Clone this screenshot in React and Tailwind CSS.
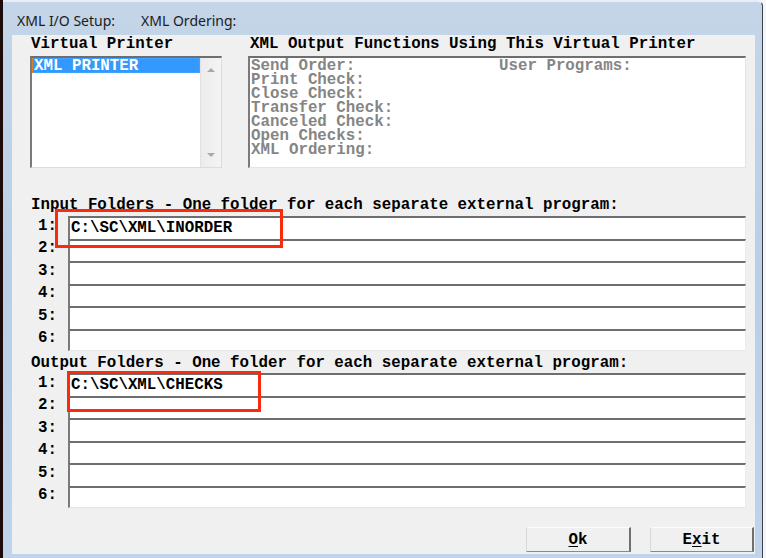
import React from "react";

const mono = "font-['Liberation_Mono',monospace] font-bold text-[15.8px] leading-[14px]";

const functions = [
  "Send Order:",
  "Print Check:",
  "Close Check:",
  "Transfer Check:",
  "Canceled Check:",
  "Open Checks:",
  "XML Ordering:",
];

function FolderRows({ values }) {
  return (
    <div className="flex flex-col">
      {[1, 2, 3, 4, 5, 6].map((n, i) => (
        <div key={n} className="flex h-[22.5px]">
          <div className={`${mono} w-[38px] shrink-0 flex items-center justify-end pr-[11px] pb-[3px] text-black`}>
            {n}:
          </div>
          <div
            className={`flex-1 bg-white border-t-2 border-l-2 border-t-[#6e6e6e] border-l-[#7a7a7a] flex items-center pl-[1px] ${
              i === 5 ? "border-b border-b-[#e6e6e6]" : ""
            } border-r border-r-[#ececec]`}
          >
            <span className={`${mono} text-black`}>{values[i] || ""}</span>
          </div>
        </div>
      ))}
    </div>
  );
}

function Arrow({ up }) {
  return (
    <svg width="8" height="5" viewBox="0 0 8 5">
      {up ? <path d="M0 5 L4 1 L8 5 Z" fill="#a9a9a9" /> : <path d="M0 0 L4 4 L8 0 Z" fill="#a9a9a9" />}
    </svg>
  );
}

function Button({ children }) {
  return (
    <button className="w-full h-[25px] bg-[#f0f0f0] border-t border-l border-t-[#fdfdfd] border-l-[#d8d8d8] border-r-2 border-b border-r-[#707070] border-b-[#8a8a8a] flex items-center justify-center">
      <span className={`${mono} text-black`}>{children}</span>
    </button>
  );
}

export default function App() {
  return (
    <div className="w-[766px] h-[558px] relative overflow-hidden flex bg-[#f4f6f8]">
      {/* desktop strip on the left */}
      <div className="w-[3px] h-full bg-[#1d0b09] shrink-0" />

      {/* window frame */}
      <div className="w-[760px] h-full rounded-tr-[6px] border-t-2 border-t-[#e9eef4] border-r border-r-[#3b4049] bg-gradient-to-b from-[#c4d5e8] via-[#b9cfe6] to-[#bfd4eb] flex flex-col">
        <div className="h-[33px] flex items-center pl-[14px] pt-[4px] gap-[26px] font-['Noto_Sans',sans-serif] text-[14px] text-[#1b1b1b]">
          <span>XML I/O Setup:</span>
          <span>XML Ordering:</span>
        </div>

        {/* client area */}
        <div className="ml-[9px] w-[743px] h-[519px] bg-[#f0f0f0] flex flex-col pl-[18px] pr-[9px] pt-[2px]">
          <div className="flex gap-[26px]">
            <div className="w-[192px] flex flex-col">
              <div className={`${mono} h-[19px] ml-[1px] text-black`}>Virtual Printer</div>
              <div className="h-[112px] bg-white border-t-2 border-l-2 border-t-[#6e6e6e] border-l-[#7a7a7a] border-b border-r border-b-[#dcdcdc] border-r-[#dcdcdc] flex">
                <div className="flex-1">
                  <div className="h-[15px] bg-[#3399ff] border border-dotted border-[#e0892c] flex items-center pl-[1px]">
                    <span className={`${mono} text-white`}>XML PRINTER</span>
                  </div>
                </div>
                <div className="w-[21px] bg-gradient-to-r from-[#ececec] to-[#f4f4f4] border-l border-l-[#e2e2e2] flex flex-col items-center justify-between pt-[9px] pb-[9px]">
                  <Arrow up />
                  <Arrow />
                </div>
              </div>
            </div>

            <div className="flex-1 flex flex-col">
              <div className={`${mono} h-[19px] ml-[2px] text-black`}>
                XML Output Functions Using This Virtual Printer
              </div>
              <div className="h-[112px] bg-white border-t-2 border-l-2 border-t-[#6e6e6e] border-l-[#7a7a7a] border-b border-r border-b-[#e4e4e4] border-r-[#e4e4e4] flex pl-[1px] pt-[1px]">
                <div className="w-[248px] flex flex-col">
                  {functions.map((f) => (
                    <div key={f} className={`${mono} leading-[14.3px] text-[#858585]`}>
                      {f}
                    </div>
                  ))}
                </div>
                <div className={`${mono} leading-[14.3px] text-[#858585]`}>User Programs:</div>
              </div>
            </div>
          </div>

          <div className={`${mono} mt-[30px] ml-[1px] text-black`}>
            Input Folders - One folder for each separate external program:
          </div>
          <div className="mt-[4px]">
            <FolderRows values={["C:\\SC\\XML\\INORDER"]} />
          </div>

          <div className={`${mono} mt-[5px] ml-[1px] text-black`}>
            Output Folders - One folder for each separate external program:
          </div>
          <div className="mt-[3px]">
            <FolderRows values={["C:\\SC\\XML\\CHECKS"]} />
          </div>

          <div className="mt-[19px] -mr-[8px] flex justify-end gap-[19px]">
            <div className="w-[105px]">
              <Button>
                <span className="underline underline-offset-2">O</span>k
              </Button>
            </div>
            <div className="w-[104px]">
              <Button>
                E<span className="underline underline-offset-2">x</span>it
              </Button>
            </div>
          </div>
        </div>
      </div>

      {/* red callouts over the first folder rows */}
      <div className="absolute left-[55px] top-[209px] w-[228px] h-[39px] border-[3px] border-[#fa2a0c]" />
      <div className="absolute left-[67px] top-[371px] w-[194px] h-[41px] border-[3px] border-[#fa2a0c]" />
    </div>
  );
}
